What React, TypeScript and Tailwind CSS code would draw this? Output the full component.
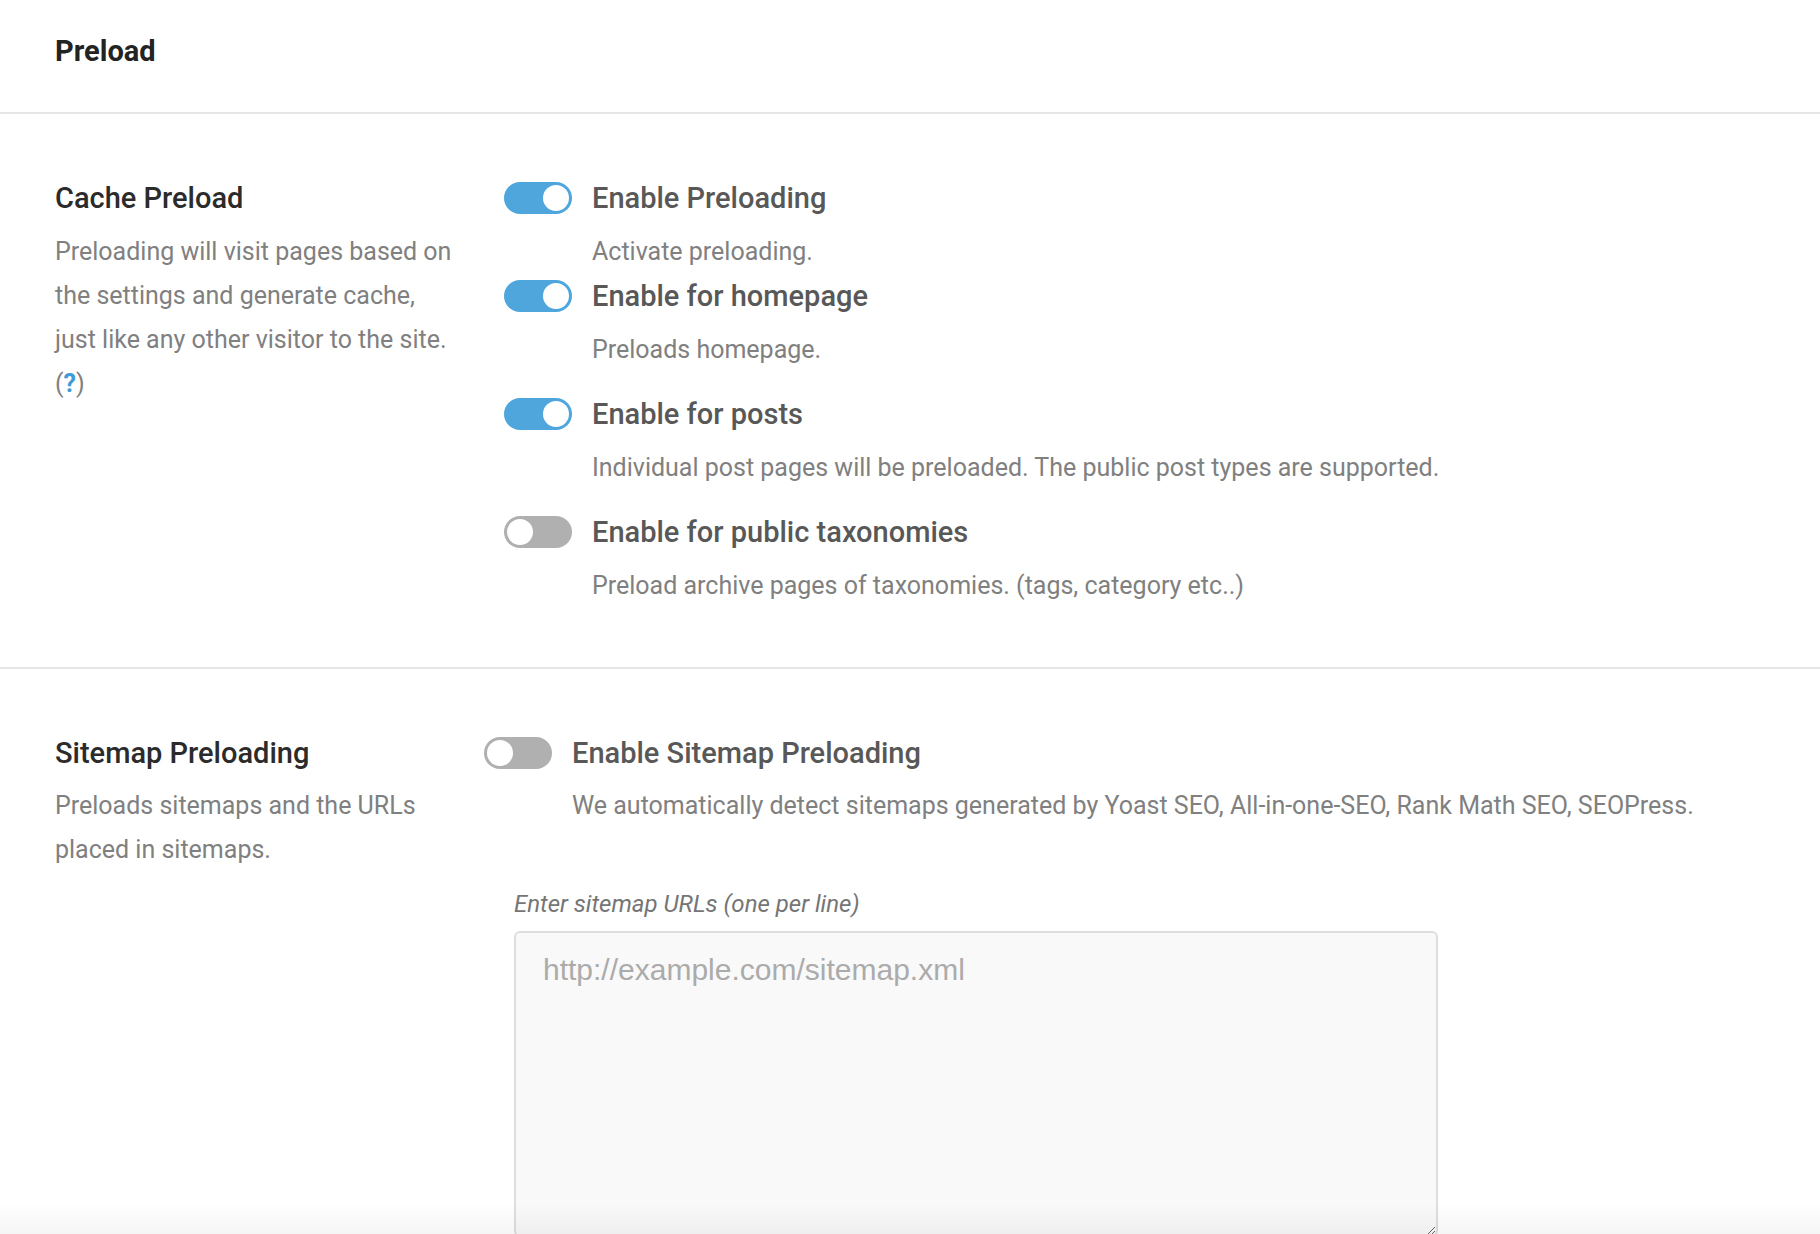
import React from 'react'

// Preload settings panel: header, two setting sections (cache + sitemap)

type ToggleProps = { on: boolean }

function Toggle({ on }: ToggleProps) {
  return (
    <span
      className={`relative inline-flex h-[32px] w-[68px] shrink-0 items-center rounded-full ${
        on ? 'bg-[#4fa6dd]' : 'bg-[#b0b0b0]'
      }`}
    >
      <span
        className={`absolute top-[1px] h-[30px] w-[30px] rounded-full bg-white border-2 ${
          on ? 'right-[1px] border-[#4fa6dd]' : 'left-[1px] border-[#b0b0b0]'
        }`}
      />
    </span>
  )
}

const options = [
  { label: 'Enable Preloading', desc: 'Activate preloading.', on: true, gap: 'mb-[5px]' },
  { label: 'Enable for homepage', desc: 'Preloads homepage.', on: true, gap: 'mb-[25px]' },
  {
    label: 'Enable for posts',
    desc: 'Individual post pages will be preloaded. The public post types are supported.',
    on: true,
    gap: 'mb-[25px]',
  },
  {
    label: 'Enable for public taxonomies',
    desc: 'Preload archive pages of taxonomies. (tags, category etc..)',
    on: false,
    gap: '',
  },
]

export default function App() {
  return (
    <div className="min-h-screen bg-white font-['Roboto','Liberation_Sans',sans-serif]">
      {/* Header */}
      <div className="h-[114px] border-b-2 border-[#e6e6e6] px-[55px] pt-[34px]">
        <h1 className="text-[29px] leading-[34px] font-bold text-[#232323]">Preload</h1>
      </div>

      {/* Cache Preload */}
      <section className="flex border-b-2 border-[#e6e6e6] pl-[55px] pt-[67px] pb-[59px]">
        <div className="w-[400px] shrink-0">
          <h2 className="text-[29px] leading-[34px] font-medium text-[#2b2b2b]">Cache Preload</h2>
          <p className="mt-[15px] text-[25px] leading-[44px] text-[#808080]">
            Preloading will visit pages based on the settings and generate cache, just like any
            other visitor to the site.{' '}
            <a href="#" className="text-[#808080]">
              (<span className="font-bold text-[#3d9bd9]">?</span>)
            </a>
          </p>
        </div>

        <div className="ml-[49px] flex flex-col">
          {options.map((o) => (
            <div key={o.label} className={o.gap}>
              <div className="flex items-center gap-[20px]">
                <Toggle on={o.on} />
                <span className="text-[29px] leading-[34px] font-medium text-[#585858]">
                  {o.label}
                </span>
              </div>
              <p className="mt-[15px] pl-[88px] text-[25px] leading-[44px] text-[#808080]">
                {o.desc}
              </p>
            </div>
          ))}
        </div>
      </section>

      {/* Sitemap Preloading */}
      <section className="flex pl-[55px] pt-[67px]">
        <div className="w-[400px] shrink-0">
          <h2 className="text-[29px] leading-[34px] font-medium text-[#2b2b2b]">
            Sitemap Preloading
          </h2>
          <p className="mt-[14px] text-[25px] leading-[44px] text-[#808080]">
            Preloads sitemaps and the URLs placed in sitemaps.
          </p>
        </div>

        <div className="ml-[29px] flex flex-col">
          <div className="flex items-center gap-[20px]">
            <Toggle on={false} />
            <span className="text-[29px] leading-[34px] font-medium text-[#585858]">
              Enable Sitemap Preloading
            </span>
          </div>
          <p className="mt-[14px] pl-[88px] text-[25px] leading-[44px] text-[#808080]">
            We automatically detect sitemaps generated by Yoast SEO, All-in-one-SEO, Rank Math
            SEO, SEOPress.
          </p>

          <div className="ml-[30px] mt-[61px]">
            <label className="block text-[24px] leading-[30px] italic text-[#757575]">
              Enter sitemap URLs (one per line)
            </label>
            <textarea
              placeholder="http://example.com/sitemap.xml"
              className="mt-[12px] block h-[306px] w-[924px] resize-y rounded-[6px] border-2 border-[#dedede] bg-[#f9f9f9] px-[27px] pt-[19px] font-['Liberation_Sans',Arial,sans-serif] text-[30px] leading-[36px] text-[#555] placeholder:text-[#ababab] outline-none"
            />
          </div>
        </div>
      </section>

      <div className="pointer-events-none fixed inset-x-0 bottom-0 h-[30px] bg-gradient-to-b from-transparent to-black/[0.04]" />
    </div>
  )
}
